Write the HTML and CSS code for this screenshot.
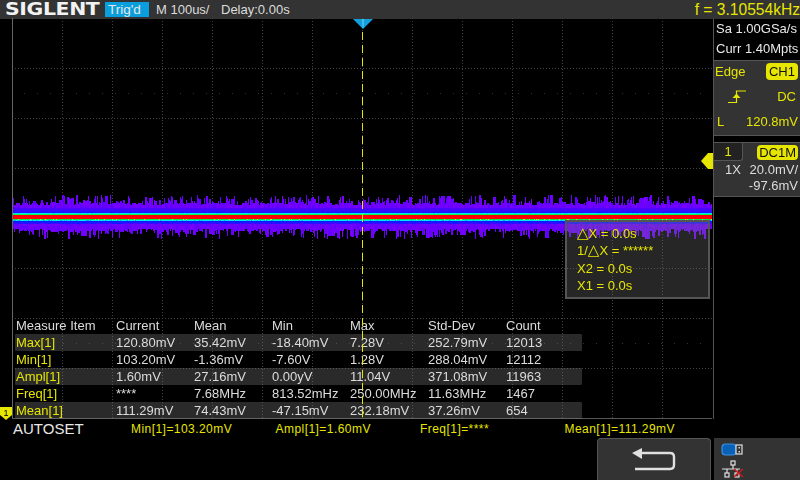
FILE: index.html
```html
<!DOCTYPE html>
<html lang="en">
<head>
  <meta charset="UTF-8" />
  <title>Oscilloscope</title>
  <link rel="stylesheet" href="styles.css">
</head>
<body>
  <div class="scope">
    <header class="topbar">
      <div class="logo"><span>SIGLENT</span></div>
      <div class="trig-state">Trig'd</div>
      <div class="timebase">M 100us/</div>
      <div class="delay">Delay:0.00s</div>
      <div class="freq">f = 3.10554kHz</div>
    </header>

    <div class="middle">
      <main class="plot">
        <canvas id="wave" width="701" height="401"></canvas>

        <svg class="trig-marker" width="20" height="10" viewBox="0 0 20 10">
          <polygon points="0,0 20,0 10,10" fill="#12a0dc" />
          <polygon points="9,0 11,0 10.5,9 9.5,9" fill="#4cc3ee" />
        </svg>

        <!-- Cursor readout -->
        <div class="cursors">
          <div><span class="delta">△</span>X = 0.0s</div>
          <div>1/<span class="delta">△</span>X = ******</div>
          <div>X2 = 0.0s</div>
          <div>X1 = 0.0s</div>
        </div>

        <div class="measure">
          <div class="mrow mhead"><span>Measure Item</span><span>Current</span><span>Mean</span><span>Min</span><span>Max</span><span>Std-Dev</span><span>Count</span></div>
          <div class="mrow shaded"><span class="item">Max[1]</span><span>120.80mV</span><span>35.42mV</span><span>-18.40mV</span><span>7.28V</span><span>252.79mV</span><span>12013</span></div>
          <div class="mrow"><span class="item">Min[1]</span><span>103.20mV</span><span>-1.36mV</span><span>-7.60V</span><span>1.28V</span><span>288.04mV</span><span>12112</span></div>
          <div class="mrow shaded"><span class="item">Ampl[1]</span><span>1.60mV</span><span>27.16mV</span><span>0.00yV</span><span>11.04V</span><span>371.08mV</span><span>11963</span></div>
          <div class="mrow"><span class="item">Freq[1]</span><span>****</span><span>7.68MHz</span><span>813.52mHz</span><span>250.00MHz</span><span>11.63MHz</span><span>1467</span></div>
          <div class="mrow shaded"><span class="item">Mean[1]</span><span>111.29mV</span><span>74.43mV</span><span>-47.15mV</span><span>232.18mV</span><span>37.26mV</span><span>654</span></div>
        </div>

        <div class="trace-dash"></div>

        <svg class="ch-level" width="12" height="18" viewBox="0 0 12 18">
          <polygon points="0,9 7,1 12,1 12,17 7,17" fill="#e6e600" />
        </svg>

        <svg class="ch-ground" width="12" height="13" viewBox="0 0 12 13">
          <polygon points="0,0 12,0 12,8 6,13 0,8" fill="#e6e600" />
          <text x="6" y="8.5" class="ground-num">1</text>
        </svg>
      </main>

      <aside class="side">
        <div class="acq">
          <div>Sa 1.00GSa/s</div>
          <div>Curr 1.40Mpts</div>
        </div>

        <div class="panel trigger">
          <div class="prow"><span>Edge</span><span class="badge badge-src">CH1</span></div>
          <div class="prow">
            <svg class="edge-icon" width="18" height="13" viewBox="0 0 18 13">
              <path d="M0 12.5H8.5V1H18" fill="none" stroke="#e6e600" stroke-width="1.2" />
              <polygon points="4.5,8 12.5,8 8.5,3.5" fill="#e6e600" />
            </svg>
            <span class="dc">DC</span>
          </div>
          <div class="prow"><span class="lvl-l">L</span><span>120.8mV</span></div>
        </div>

        <div class="panel channel">
          <div class="ctop"><span class="ctab">1</span><span class="badge">DC1M</span></div>
          <div class="cline"><span>1X</span><span>20.0mV/</span></div>
          <div class="cline end"><span>-97.6mV</span></div>
        </div>
      </aside>
    </div>

    <footer class="bottom">
      <div class="status">
        <div class="autoset">AUTOSET</div>
        <div class="readouts">
          <span>Min[1]=103.20mV</span>
          <span>Ampl[1]=1.60mV</span>
          <span>Freq[1]=****</span>
          <span>Mean[1]=111.29mV</span>
        </div>
      </div>
      <div class="softkeys">
        <div class="softkey">
          <svg width="44" height="23" viewBox="0 0 44 23">
            <path d="M8 5H38Q42 5 42 9V17Q42 21 38 21H3" fill="none" stroke="#e0e0e0" stroke-width="2.4" />
            <polygon points="0,5 10,0 10,11" fill="#e0e0e0" />
          </svg>
        </div>
        <div class="tray">
          <svg width="24" height="14" viewBox="0 0 24 14">
            <rect x="1" y="1" width="14" height="11" rx="3.5" fill="#0a62b8" stroke="#3a90e0" stroke-width="1.2" />
            <rect x="15" y="2" width="6" height="9" fill="#333" stroke="#e0e0e0" stroke-width="1.2" />
            <rect x="17.5" y="4" width="1.5" height="1.5" fill="#e0e0e0" />
            <rect x="17.5" y="8" width="1.5" height="1.5" fill="#e0e0e0" />
          </svg>
          <svg width="24" height="18" viewBox="0 0 24 18">
            <g fill="none" stroke="#e0e0e0" stroke-width="1.2">
              <rect x="10" y="1" width="4" height="4" />
              <path d="M12 5V9M1 9H19M6 9V13M16 9V13" />
              <rect x="4" y="13" width="4" height="4" />
              <rect x="14" y="13" width="4" height="4" />
            </g>
            <path d="M13 9L22 17M22 9L13 17" stroke="#d01818" stroke-width="1.4" />
          </svg>
        </div>
      </div>
    </footer>
  </div>

  <script src="plot.js"></script>
</body>
</html>
```

FILE: styles.css
```css
* {
  box-sizing: border-box;
}
html, body {
  margin: 0;
  padding: 0;
  background: #000;
}
body {
  font-family: "Liberation Sans", Arial, sans-serif;
  font-size: 13px;
  color: #dcdcdc;
  overflow: hidden;
}
.scope {
  width: 800px;
  height: 480px;
  display: flex;
  flex-direction: column;
}

/* top bar */
.topbar {
  height: 19px;
  background: #333;
  display: flex;
  align-items: center;
  flex: none;
}
.logo {
  width: 105px;
  padding-left: 5px;
  font-family: "DejaVu Sans", sans-serif;
  font-weight: 700;
  font-size: 17px;
  line-height: 19px;
  color: #f2f2f2;
}
.logo span {
  display: inline-block;
  transform: scaleX(1.2);
  transform-origin: left center;
  letter-spacing: -0.3px;
}
.trig-state {
  width: 44px;
  height: 15px;
  margin-top: -1px;
  padding-left: 3px;
  background: #0a9fdc;
  color: #e8e8e8;
  font-size: 13.5px;
  line-height: 15px;
}
.timebase {
  margin-left: 7px;
  width: 65px;
}
.delay {
  font-size: 13px;
}
.freq {
  margin-left: auto;
  color: #e6e600;
  font-size: 15.6px;
  white-space: nowrap;
}

/* plot */
.middle {
  display: flex;
  height: 400px;
  flex: none;
}
.plot {
  position: relative;
  width: 713px;
  height: 400px;
  padding-left: 15px;
  display: flex;
  flex-direction: column;
  justify-content: flex-end;
}
#wave {
  position: absolute;
  left: 12px;
  top: -1px;
}
.trig-marker {
  position: absolute;
  left: 353px;
  top: 0;
}
.trace-dash {
  position: absolute;
  left: 362px;
  top: 13px;
  width: 1px;
  height: 386px;
  background: repeating-linear-gradient(to bottom, #e6e600 0 8px, transparent 8px 13px);
}
.ch-level {
  position: absolute;
  left: 701px;
  top: 133px;
}
.ch-ground {
  position: absolute;
  left: 0;
  top: 388px;
}
.ground-num {
  font-family: "Liberation Sans", sans-serif;
  font-size: 9px;
  fill: #000;
  text-anchor: middle;
}
.cursors {
  position: absolute;
  left: 565px;
  top: 201px;
  width: 145px;
  height: 79px;
  padding: 3px 0 0 10px;
  background: rgba(127, 127, 127, 0.3);
  border: 2px solid #555;
  color: #e6e600;
  line-height: 17.4px;
}
.delta {
  font-family: "DejaVu Sans", sans-serif;
  font-size: 15px;
  line-height: 0;
}

/* measurements */
.measure {
  position: relative;
  width: 567px;
}
.mrow {
  display: grid;
  grid-template-columns: 100px repeat(6, 78px);
  height: 17px;
  line-height: 17px;
  padding-left: 1px;
  white-space: nowrap;
}
.mhead {
  height: 16px;
  line-height: 15px;
}
.shaded {
  background: rgba(127, 127, 127, 0.33);
  border-radius: 1px;
}
.item {
  color: #e6e600;
}

/* right column */
.side {
  width: 87px;
  border-left: 1px solid #555;
  position: relative;
}
.acq {
  height: 41px;
  padding-left: 2px;
  color: #e8e8e8;
  line-height: 20px;
  white-space: nowrap;
}
.panel {
  background: #333;
  border-top: 1px solid #555;
  border-bottom: 1px solid #555;
}
.trigger {
  height: 76px;
  padding: 0 2px 0 1px;
  color: #e6e600;
  display: flex;
  flex-direction: column;
  gap: 4px;
}
.prow {
  display: flex;
  justify-content: space-between;
  align-items: center;
  height: 21px;
}
.edge-icon {
  margin-left: 13px;
}
.dc {
  margin-right: 2px;
}
.lvl-l {
  margin-left: 2px;
}
.badge {
  background: #e6e600;
  color: #111;
  border-radius: 4px;
  padding: 0 2px;
  line-height: 15px;
  height: 15px;
}
.badge-src {
  padding: 0 3px;
  line-height: 17px;
  height: 17px;
}
.channel {
  height: 55px;
  margin-top: 6px;
  color: #ddd;
}
.ctop {
  display: flex;
  justify-content: space-between;
  align-items: center;
  height: 18px;
  padding-right: 2px;
}
.ctab {
  width: 29px;
  height: 18px;
  line-height: 17px;
  text-align: center;
  background: #222;
  color: #e6e600;
  border-right: 1px solid #555;
  border-bottom: 1px solid #555;
  border-bottom-right-radius: 3px;
}
.cline {
  display: flex;
  justify-content: space-between;
  padding: 1px 2px 0 11px;
  line-height: 15px;
}
.cline.end {
  justify-content: flex-end;
}

/* bottom */
.bottom {
  flex: 1;
  display: flex;
  flex-direction: column;
}
.status {
  display: flex;
  height: 19px;
  flex: none;
  align-items: center;
}
.autoset {
  width: 131px;
  padding-left: 13px;
  font-size: 15px;
  color: #e8e8e8;
  flex: none;
}
.readouts {
  display: grid;
  grid-template-columns: repeat(4, 144.5px);
  color: #e6e600;
  font-size: 12px;
  letter-spacing: 0.45px;
  white-space: nowrap;
}
.softkeys {
  flex: 1;
  display: flex;
  justify-content: flex-end;
  gap: 3px;
}
.softkey {
  width: 114px;
  background: #333;
  border: 1px solid #555;
  border-bottom: none;
  border-radius: 4px 4px 0 0;
  display: flex;
  justify-content: center;
  align-items: center;
}
.tray {
  width: 86px;
  background: #333;
  padding: 5px 0 0 7px;
  display: flex;
  flex-direction: column;
  gap: 3px;
}
```

FILE: plot.js
```js
// grid and noise trace, seeded so every run gives the same picture
var canvas = document.getElementById('wave');
var ctx = canvas.getContext('2d');
var seed = 4711;

function rnd() {
  seed = (seed * 16807) % 2147483647;
  return seed / 2147483647;
}

function drawGrid() {
  var x, y;
  ctx.fillStyle = '#424242';
  for (x = 50; x < 700; x += 50) {
    for (y = 0; y < 400; y += 3) ctx.fillRect(x, y, 1, 1);
  }
  for (y = 50; y < 400; y += 50) {
    for (x = 0; x < 700; x += 3) ctx.fillRect(x, y, 1, 1);
  }
  ctx.fillStyle = '#333';
  for (x = 12; x < 700; x += 13) {
    ctx.fillRect(x, 75, 1, 1);
    ctx.fillRect(x, 325, 1, 1);
  }
  ctx.fillStyle = '#666';
  ctx.fillRect(0, 0, 1, 400);
  ctx.fillStyle = '#555';
  ctx.fillRect(0, 400, 700, 1);
}

function mix(a, b, t) {
  return 'rgb(' + Math.round(a[0] + (b[0] - a[0]) * t) + ',' +
    Math.round(a[1] + (b[1] - a[1]) * t) + ',' +
    Math.round(a[2] + (b[2] - a[2]) * t) + ')';
}

function spike() {
  if (rnd() < 0.4) return Math.floor(rnd() * 3);
  return 2 + Math.floor(Math.pow(rnd(), 1.3) * 9);
}

function drawTrace() {
  var violet = [124, 0, 255];
  var indigo = [92, 0, 255];
  var blue = [0, 30, 255];
  var up = 0, down = 0, y;
  for (var x = 1; x < 700; x++) {
    // spikes are 1-2px wide
    if (rnd() < 0.7) up = spike();
    if (rnd() < 0.7) down = spike();

    ctx.fillStyle = mix(violet, indigo, rnd());
    ctx.fillRect(x, 187 - up, 1, up + 24 + down);

    // dense body
    for (y = 187; y < 211; y += 3) {
      ctx.fillStyle = mix(violet, indigo, rnd());
      ctx.fillRect(x, y, 1, 3);
    }
    for (y = 190; y < 195; y++) {
      ctx.fillStyle = mix(indigo, blue, (0.3 + rnd() * 0.7) * (y - 189) / 5);
      ctx.fillRect(x, y, 1, 1);
    }
    for (y = 203; y < 206; y++) {
      ctx.fillStyle = mix(blue, indigo, rnd() * (y - 202) / 3);
      ctx.fillRect(x, y, 1, 1);
    }

    // core of the trace
    ctx.fillStyle = rnd() < 0.85 ? '#00e8f0' : '#00c8ff';
    ctx.fillRect(x, 195, 1, 1);
    ctx.fillStyle = '#00ff40';
    ctx.fillRect(x, 196, 1, 1);
    ctx.fillStyle = '#ff0000';
    ctx.fillRect(x, 197, 1, 4);
    ctx.fillStyle = rnd() < 0.1 ? '#e8e820' : '#00f040';
    ctx.fillRect(x, 201, 1, 1);
    ctx.fillStyle = rnd() < 0.85 ? '#00e8f0' : '#00a0ff';
    ctx.fillRect(x, 202, 1, 1);
  }
}

drawGrid();
drawTrace();
```
